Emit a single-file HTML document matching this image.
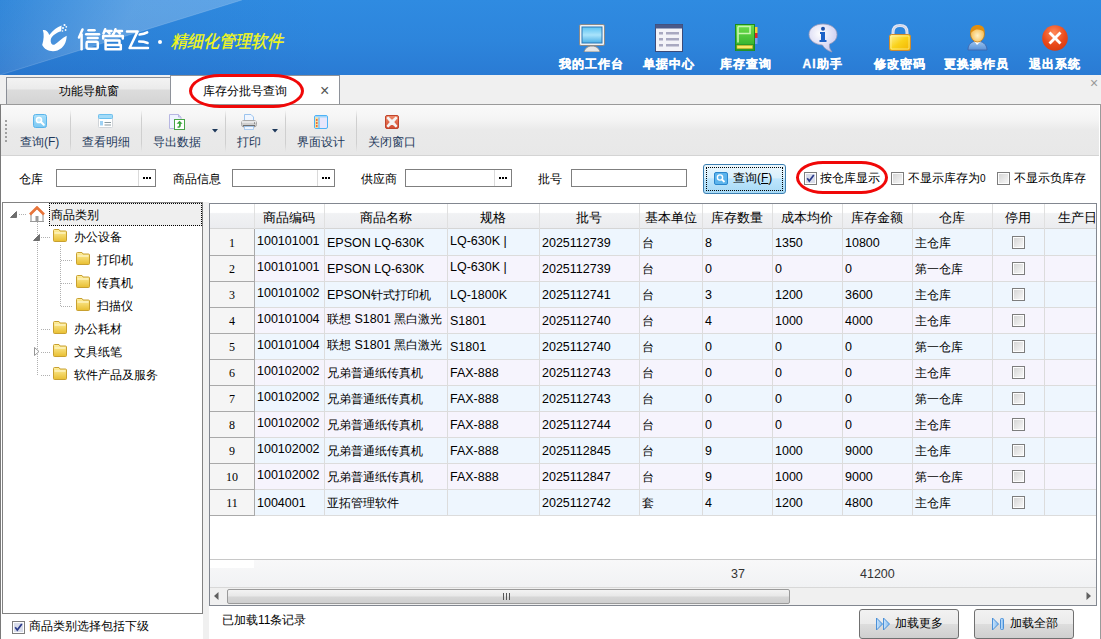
<!DOCTYPE html><html><head><meta charset="utf-8"><style>
*{box-sizing:border-box;margin:0;padding:0}
html,body{width:1101px;height:639px;overflow:hidden;background:#fff;font-family:"Liberation Sans",sans-serif;font-size:12px;color:#000}
div,svg{position:absolute}
.t{white-space:nowrap;line-height:1}
</style></head><body><div style="left:0px;top:0px;width:1101px;height:75px;background:linear-gradient(180deg,#2f8be1 0%,#2d85dc 55%,#2a7bd4 100%);overflow:hidden"><div style="left:0;top:0;width:1101px;height:75px;background:linear-gradient(90deg,rgba(0,30,90,.06),rgba(0,0,0,0) 30%)"></div><svg style="left:0;top:0" width="400" height="75"><defs><linearGradient id="sh" gradientUnits="userSpaceOnUse" x1="0" y1="0" x2="110" y2="55"><stop offset="0" stop-color="#fff" stop-opacity=".03"/><stop offset="1" stop-color="#fff" stop-opacity=".23"/></linearGradient></defs><polygon points="0,0 242,0 0,75" fill="url(#sh)"/><line x1="242" y1="0" x2="0" y2="75" stroke="#fff" stroke-opacity=".15" stroke-width="1"/></svg></div>
<svg style="left:38px;top:20px;" width="34" height="36" viewBox="0 0 34 36"><path d="M4.8 10.1 C7.5 9.6 9.8 10.8 11.3 15 C15 10.5 19 7.2 23.6 5.6 L23.2 11.2 C18.5 12.5 13.8 15.5 12.8 19.5 C12.3 23 14 25.2 16.3 24.8 C20 22.5 24 18 28.7 15.8 C28.6 22 26 28 19.5 30.5 C13 32.5 6.5 30 4.2 25 C5.8 20 6.3 14 4.8 10.1 Z" fill="#fff"/>
<circle cx="26.5" cy="5" r="1.1" fill="#fff"/><circle cx="28.3" cy="6.8" r=".9" fill="#fff"/><circle cx="25" cy="8" r="1" fill="#fff"/><circle cx="27.6" cy="10" r=".9" fill="#fff"/><circle cx="24.5" cy="11" r=".8" fill="#fff"/></svg>
<svg style="left:74px;top:24px;" width="80" height="30" viewBox="0 0 80 30"><g fill="none" stroke="#fff" stroke-width="2.5" stroke-linecap="round" stroke-linejoin="round">
<path d="M8.5 5.5 L5 13.5"/><path d="M7.6 10.5 L7.6 25.2"/>
<path d="M14.5 6.2 L20.5 6.2"/><path d="M12.2 10.2 L25 10.2"/><path d="M13.8 14 L23.6 14"/>
<rect x="12.6" y="17.8" width="11.2" height="7" rx="1.2"/>
<path d="M31.2 5.2 L29.5 9.5"/><path d="M31 7 L37.5 7"/><path d="M34 7.5 L35.5 9.5"/>
<path d="M41.5 5.2 L39.8 9.5"/><path d="M41.3 7 L48 7"/><path d="M44.3 7.5 L45.8 9.5"/>
<path d="M29.2 14.5 L29.2 12 L48.8 12 L48.8 14.5"/><path d="M39 10.2 L39 11.5"/>
<path d="M31.6 16 L31.6 25.2 L46.8 25.2 L46.8 21 L31.6 21"/><path d="M31.6 16.5 L45.5 16.5 L45.5 19.5"/>
<path d="M53 7.4 L63.6 7.4 L55.6 24 L74 24"/>
<path d="M65.6 10.6 C68.5 10.4 71 9.8 73.2 8.4"/><path d="M65.2 17.6 C68.5 17.6 71 18 73.6 19"/>
</g></svg>
<div style="left:158px;top:40px;width:4px;height:4px;background:#fff;border-radius:2px"></div>
<div class="t" style="left:171px;top:33px;font-size:16px;color:#f8fa10;font-style:italic;-webkit-text-stroke:.3px #f8fa10;transform:scaleY(1.07);transform-origin:0 0">精细化管理软件</div>
<svg style="left:579px;top:24px;" width="26" height="28" viewBox="0 0 26 28"><defs><linearGradient id="scr" x1="0" y1="0" x2="0" y2="1"><stop offset="0" stop-color="#5cc2f2"/><stop offset=".5" stop-color="#a9e3fb"/><stop offset="1" stop-color="#4aaee6"/></linearGradient></defs>
<rect x="0.5" y="0.5" width="25" height="21" rx="1.5" fill="#f2f2f2" stroke="#8a8a8a"/>
<rect x="3" y="3" width="20" height="16" fill="url(#scr)" stroke="#2a78b8" stroke-width="1"/>
<path d="M5 28 C6 24 9 22 13 22 C17 22 20 24 21 28 Z" fill="#e6e6e6" stroke="#8a8a8a"/></svg>
<div class="t" style="left:551.5px;top:58px;width:80px;text-align:center;font-size:12px;font-weight:bold;color:#fff;letter-spacing:1px;-webkit-text-stroke:.3px #fff">我的工作台</div>
<svg style="left:655px;top:24px;" width="28" height="28" viewBox="0 0 28 28"><rect x="0.5" y="0.5" width="27" height="27" fill="#f3f3f8" stroke="#3b4a78"/>
<rect x="0.5" y="0.5" width="27" height="4" fill="#4a5a8a"/>
<rect x="4" y="8" width="4" height="2.5" fill="#a8a8c0"/><rect x="11" y="8" width="13" height="2.5" fill="#a8a8c0"/>
<rect x="4" y="14" width="4" height="2.5" fill="#a8a8c0"/><rect x="11" y="14" width="13" height="2.5" fill="#a8a8c0"/>
<rect x="4" y="20" width="4" height="2.5" fill="#a8a8c0"/><rect x="11" y="20" width="13" height="2.5" fill="#a8a8c0"/></svg>
<div class="t" style="left:629px;top:58px;width:80px;text-align:center;font-size:12px;font-weight:bold;color:#fff;letter-spacing:1px;-webkit-text-stroke:.3px #fff">单据中心</div>
<svg style="left:735px;top:24px;" width="23" height="27" viewBox="0 0 23 27"><defs><linearGradient id="bk" x1="0" y1="0" x2="0" y2="1"><stop offset="0" stop-color="#6ee04a"/><stop offset="1" stop-color="#2aa82a"/></linearGradient></defs>
<rect x="19" y="3" width="3.5" height="6" fill="#f8d030"/><rect x="19" y="9" width="3.5" height="5" fill="#e02828"/><rect x="19" y="14" width="3.5" height="6" fill="#7a9ef0"/>
<rect x="0.5" y="0.5" width="19" height="26" fill="url(#bk)" stroke="#1f8a1f"/>
<path d="M3 2.5 L3 18.5 M3 2.5 L15 2.5 L15 9.5 L3 9.5" fill="none" stroke="#c8f5b0" stroke-width="1.6"/>
<rect x="1" y="20" width="18" height="6.5" fill="#2a9a2a"/>
<rect x="2" y="21.5" width="15.5" height="3" fill="#f8e868" stroke="#d8b820" stroke-width=".6"/></svg>
<div class="t" style="left:706px;top:58px;width:80px;text-align:center;font-size:12px;font-weight:bold;color:#fff;letter-spacing:1px;-webkit-text-stroke:.3px #fff">库存查询</div>
<svg style="left:808px;top:23px;" width="30" height="30" viewBox="0 0 30 30"><defs><radialGradient id="bub" cx=".4" cy=".35" r=".7"><stop offset="0" stop-color="#fff"/><stop offset="1" stop-color="#c9c9ef"/></radialGradient></defs>
<path d="M15 1 C23 1 29 5.5 29 11.5 C29 16 26 19.5 21.5 21 C21 24 22 26.5 24 29 C19 27.5 16 25 14.5 22 C6.5 21.5 1 17 1 11.5 C1 5.5 7 1 15 1 Z" fill="url(#bub)" stroke="#9a9ab8" stroke-width=".8"/>
<circle cx="15" cy="5.8" r="2" fill="#1c4fa8"/><path d="M12 9 L17 9 L17 17 L18.5 17 L18.5 19 L11.5 19 L11.5 17 L13 17 L13 11 L12 11 Z" fill="#1e62c8"/></svg>
<div class="t" style="left:782.5px;top:58px;width:80px;text-align:center;font-size:12px;font-weight:bold;color:#fff;letter-spacing:1px;-webkit-text-stroke:.3px #fff">AI助手</div>
<svg style="left:889px;top:24px;" width="22" height="27" viewBox="0 0 22 27"><defs><linearGradient id="lk" x1="0" y1="0" x2="1" y2="1"><stop offset="0" stop-color="#fff39a"/><stop offset=".5" stop-color="#f9d21a"/><stop offset="1" stop-color="#f2b300"/></linearGradient></defs>
<path d="M4 11 L4 8.5 C4 3.5 7 1.6 11 1.6 C15 1.6 18 3.5 18 8.5 L18 11" fill="none" stroke="#e2e6f4" stroke-width="3"/><path d="M4 11 L4 8.5 C4 3.5 7 1.6 11 1.6 C15 1.6 18 3.5 18 8.5 L18 11" fill="none" stroke="#b8bcd0" stroke-width=".5"/>
<rect x="0.5" y="10.5" width="21" height="16" rx="2" fill="url(#lk)" stroke="#d08a2a"/><rect x="2" y="12" width="18" height="13" rx="1" fill="none" stroke="#fff6b0" stroke-opacity=".6"/></svg>
<div class="t" style="left:859.5px;top:58px;width:80px;text-align:center;font-size:12px;font-weight:bold;color:#fff;letter-spacing:1px;-webkit-text-stroke:.3px #fff">修改密码</div>
<svg style="left:967px;top:24px;" width="21" height="27" viewBox="0 0 21 27"><defs><radialGradient id="fc" cx=".5" cy=".6" r=".6"><stop offset="0" stop-color="#fff2c8"/><stop offset="1" stop-color="#f5b23c"/></radialGradient><linearGradient id="bd" x1="0" y1="0" x2="0" y2="1"><stop offset="0" stop-color="#9ec6f0"/><stop offset="1" stop-color="#5a92d8"/></linearGradient></defs>
<path d="M1 26 C1 20 5 17 10 17 C15 17 20 20 20 26 Z" fill="url(#bd)" stroke="#3c62a8" stroke-width=".8"/>
<path d="M7 17 L10 21 L14 17 Z" fill="#fff"/>
<ellipse cx="10.5" cy="10" rx="7" ry="8" fill="url(#fc)" stroke="#c07a10" stroke-width=".8"/>
<path d="M3.5 9 C3 3 7 1 10.5 1 C15 1 18 3.5 17.5 8 C15 6 11 5 8 6 C6 7 5 8 3.5 9 Z" fill="#e08e10"/></svg>
<div class="t" style="left:936.5px;top:58px;width:80px;text-align:center;font-size:12px;font-weight:bold;color:#fff;letter-spacing:1px;-webkit-text-stroke:.3px #fff">更换操作员</div>
<svg style="left:1042px;top:25px;" width="26" height="26" viewBox="0 0 26 26"><defs><radialGradient id="ex" cx=".45" cy=".3" r=".75"><stop offset="0" stop-color="#ff8a5a"/><stop offset=".6" stop-color="#ea4a1a"/><stop offset="1" stop-color="#d63a10"/></radialGradient></defs>
<circle cx="13" cy="13" r="12.8" fill="url(#ex)"/>
<path d="M8.5 6.5 L13 11 L17.5 6.5 L19.5 8.5 L15 13 L19.5 17.5 L17.5 19.5 L13 15 L8.5 19.5 L6.5 17.5 L11 13 L6.5 8.5 Z" fill="#fff"/></svg>
<div class="t" style="left:1014.5px;top:58px;width:80px;text-align:center;font-size:12px;font-weight:bold;color:#fff;letter-spacing:1px;-webkit-text-stroke:.3px #fff">退出系统</div>
<div style="left:0px;top:75px;width:1101px;height:30px;background:#f0f0f0"></div>
<div style="left:6px;top:77px;width:165px;height:28px;border:1px solid #8a8e96;border-bottom:none;background:linear-gradient(#f3f3f3 0%,#ebebeb 40%,#dcdcdc 45%,#d3d3d3 100%)"></div>
<div class="t" style="left:6px;top:85px;width:165px;text-align:center">功能导航窗</div>
<div style="left:170px;top:75px;width:170px;height:31px;border:1px solid #8e929a;border-bottom:none;background:#fff"></div>
<div class="t" style="left:203px;top:85px;">库存分批号查询</div>
<div class="t" style="left:320px;top:83px;font-size:16px;color:#555">×</div>
<div class="t" style="left:1090px;top:76px;font-size:14px;color:#999">×</div>
<div style="left:0px;top:104px;width:1101px;height:535px;border-left:1px solid #7a7a7a;border-top:1px solid #9a9a9a;border-right:1px solid #9a9a9a;background:#fff"></div>
<div style="left:1px;top:105px;width:1098px;height:51px;background:linear-gradient(#fafafa 0%,#f4f4f4 30%,#eaeaea 50%,#e8e8e8 100%);border-bottom:1px solid #d4d4d4"></div>
<div style="left:5px;top:120px;width:2px;height:2px;background:#a0a0a0"></div>
<div style="left:5px;top:124px;width:2px;height:2px;background:#a0a0a0"></div>
<div style="left:5px;top:128px;width:2px;height:2px;background:#a0a0a0"></div>
<div style="left:5px;top:132px;width:2px;height:2px;background:#a0a0a0"></div>
<div style="left:5px;top:136px;width:2px;height:2px;background:#a0a0a0"></div>
<div style="left:5px;top:140px;width:2px;height:2px;background:#a0a0a0"></div>
<div style="left:70px;top:110px;width:1px;height:42px;background:linear-gradient(rgba(200,200,200,0),#cfcfcf 20%,#cfcfcf 80%,rgba(200,200,200,0))"></div>
<div style="left:141px;top:110px;width:1px;height:42px;background:linear-gradient(rgba(200,200,200,0),#cfcfcf 20%,#cfcfcf 80%,rgba(200,200,200,0))"></div>
<div style="left:225px;top:110px;width:1px;height:42px;background:linear-gradient(rgba(200,200,200,0),#cfcfcf 20%,#cfcfcf 80%,rgba(200,200,200,0))"></div>
<div style="left:285px;top:110px;width:1px;height:42px;background:linear-gradient(rgba(200,200,200,0),#cfcfcf 20%,#cfcfcf 80%,rgba(200,200,200,0))"></div>
<div style="left:356px;top:110px;width:1px;height:42px;background:linear-gradient(rgba(200,200,200,0),#cfcfcf 20%,#cfcfcf 80%,rgba(200,200,200,0))"></div>
<div class="t" style="left:20px;top:136px;width:38px;text-align:center;color:#1e395b;font-size:12px">查询(F)</div>
<svg style="left:33px;top:114px;" width="14" height="14" viewBox="0 0 14 14"><defs><linearGradient id="qg" x1="0" y1="0" x2="0" y2="1"><stop offset="0" stop-color="#a9e0fb"/><stop offset="1" stop-color="#7cc8f2"/></linearGradient></defs><rect x=".5" y=".5" width="13" height="13" rx="2" fill="url(#qg)" stroke="#5ab4ea"/><circle cx="6" cy="6" r="2.6" fill="#c8ecfc" stroke="#fff" stroke-width="1.5"/><path d="M7.8 7.8 L10.8 10.8" stroke="#fff" stroke-width="2" stroke-linecap="round"/></svg>
<div class="t" style="left:80px;top:136px;width:51px;text-align:center;color:#1e395b;font-size:12px">查看明细</div>
<svg style="left:98px;top:114px;" width="15" height="14" viewBox="0 0 15 14"><rect x=".5" y=".5" width="14" height="13" rx="1" fill="#fff" stroke="#d0d4d8"/><rect x=".5" y=".5" width="14" height="4" rx="1" fill="#a3dbf8" stroke="#6cc0ee"/><rect x="2" y="7" width="3" height="4.5" fill="#9fd2f4"/><rect x="6.5" y="8" width="6.5" height="1" fill="#8a9aa0"/><rect x="6.5" y="10.5" width="6.5" height="1" fill="#8a9aa0"/></svg>
<div class="t" style="left:151px;top:136px;width:52px;text-align:center;color:#1e395b;font-size:12px">导出数据</div>
<svg style="left:169px;top:114px;" width="16" height="16" viewBox="0 0 16 16"><path d="M.5 .5 L9.5 .5 L12 3 L12 14.5 L.5 14.5 Z" fill="#eef3ff" stroke="#b7b6e2"/><path d="M9.5 .5 L9.5 3 L12 3" fill="#d9d8f4" stroke="#b7b6e2"/><rect x="5.5" y="5.5" width="10" height="10" fill="#fff" stroke="#48a448"/><path d="M10.5 6.8 L13.6 9.8 L11.8 9.8 L11.8 11.5 C11.8 13 10.5 14 8.5 13.8 L8.5 12.6 C9.5 12.6 10 12 10 11.3 L10 9.8 L7.6 9.8 Z" fill="#3aa83a"/></svg>
<svg style="left:212px;top:129px;" width="6" height="4" viewBox="0 0 6 4"><path d="M0 0 L6 0 L3 3.5 Z" fill="#1e395b"/></svg>
<div class="t" style="left:236px;top:136px;width:26px;text-align:center;color:#1e395b;font-size:12px">打印</div>
<svg style="left:241px;top:114px;" width="16" height="16" viewBox="0 0 16 16"><path d="M3.5 .5 L10 .5 L12.5 3 L12.5 7 L3.5 7 Z" fill="#f0f6ff" stroke="#9cc4ee"/><rect x=".5" y="6.5" width="15" height="6.5" rx="2.5" fill="#cfcfcf" stroke="#a8a8a8"/><rect x="1" y="7" width="14" height="2" fill="#e6e6e6"/><rect x="2" y="11" width="12" height="1.5" fill="#6e6e6e"/><rect x="3.5" y="12.5" width="9" height="3" fill="#eef5ff" stroke="#9cc4ee" stroke-width=".8"/><rect x="13" y="8.5" width="1" height="1" fill="#555"/></svg>
<svg style="left:272px;top:129px;" width="6" height="4" viewBox="0 0 6 4"><path d="M0 0 L6 0 L3 3.5 Z" fill="#1e395b"/></svg>
<div class="t" style="left:295px;top:136px;width:52px;text-align:center;color:#1e395b;font-size:12px">界面设计</div>
<svg style="left:314px;top:115px;" width="14" height="14" viewBox="0 0 14 14"><rect x=".5" y=".5" width="13" height="13" rx="1.5" fill="#e8e6fb" stroke="#4fb2f6"/><rect x="1" y="1" width="12" height="1.5" fill="#9fd6fa"/><rect x="1" y="2.5" width="3.5" height="10.5" fill="#f7e39a"/><rect x="4.5" y="2.5" width="1" height="10.5" fill="#4fb2f6"/><circle cx="2.8" cy="5" r=".9" fill="#e8553a"/><circle cx="2.8" cy="8" r=".9" fill="#e8553a"/><circle cx="2.8" cy="11" r=".9" fill="#e8553a"/></svg>
<div class="t" style="left:366px;top:136px;width:51px;text-align:center;color:#1e395b;font-size:12px">关闭窗口</div>
<svg style="left:385px;top:115px;" width="14" height="14" viewBox="0 0 14 14"><defs><linearGradient id="cg" x1="0" y1="0" x2="0" y2="1"><stop offset="0" stop-color="#f08a6a"/><stop offset="1" stop-color="#d04a30"/></linearGradient></defs><rect x=".5" y=".5" width="13" height="13" rx="1.5" fill="url(#cg)" stroke="#c0442c"/><path d="M3.2 2.2 L7 5.6 L10.8 2.2 L11.8 3.2 L8.4 7 L11.8 10.8 L10.8 11.8 L7 8.4 L3.2 11.8 L2.2 10.8 L5.6 7 L2.2 3.2 Z" fill="#f4f4f4" stroke="#f4f4f4" stroke-width="1.2" stroke-linejoin="round"/></svg>
<div class="t" style="left:19px;top:173px;">仓库</div>
<div style="left:56px;top:169px;width:100px;height:18px;border:1px solid #7f7f7f;background:#fff"></div>
<div style="left:138px;top:170px;width:1px;height:16px;background:#dadada"></div>
<div style="left:143px;top:177px;width:2px;height:2px;background:#000"></div>
<div style="left:146px;top:177px;width:2px;height:2px;background:#000"></div>
<div style="left:149px;top:177px;width:2px;height:2px;background:#000"></div>
<div class="t" style="left:173px;top:173px;">商品信息</div>
<div style="left:232px;top:169px;width:103px;height:18px;border:1px solid #7f7f7f;background:#fff"></div>
<div style="left:317px;top:170px;width:1px;height:16px;background:#dadada"></div>
<div style="left:322px;top:177px;width:2px;height:2px;background:#000"></div>
<div style="left:325px;top:177px;width:2px;height:2px;background:#000"></div>
<div style="left:328px;top:177px;width:2px;height:2px;background:#000"></div>
<div class="t" style="left:361px;top:173px;">供应商</div>
<div style="left:405px;top:169px;width:107px;height:18px;border:1px solid #7f7f7f;background:#fff"></div>
<div style="left:494px;top:170px;width:1px;height:16px;background:#dadada"></div>
<div style="left:499px;top:177px;width:2px;height:2px;background:#000"></div>
<div style="left:502px;top:177px;width:2px;height:2px;background:#000"></div>
<div style="left:505px;top:177px;width:2px;height:2px;background:#000"></div>
<div class="t" style="left:538px;top:173px;">批号</div>
<div style="left:571px;top:169px;width:116px;height:18px;border:1px solid #7f7f7f;background:#fff"></div>
<div style="left:703px;top:164px;width:83px;height:30px;border:1px solid #3c7fb1;border-radius:3px;background:linear-gradient(#eaf6fd 0%,#d9f0fc 45%,#bee6fd 50%,#a7d9f5 100%)"></div>
<div style="left:706px;top:167px;width:77px;height:24px;border:1px dotted #000"></div>
<svg style="left:714px;top:172px;" width="14" height="13" viewBox="0 0 14 13"><rect x=".5" y=".5" width="13" height="12" rx="1.5" fill="#5cb4ec" stroke="#2a86cc"/><circle cx="6" cy="5.5" r="2.6" fill="none" stroke="#fff" stroke-width="1.4"/><path d="M8 7.5 L10.5 10" stroke="#fff" stroke-width="1.8"/></svg>
<div class="t" style="left:733px;top:172px;">查询(<u>F</u>)</div>
<svg style="left:804px;top:172px;" width="13" height="13" viewBox="0 0 13 13"><rect x=".5" y=".5" width="12" height="12" fill="#fdfdfd" stroke="#7d7d7d"/><rect x="2" y="2" width="9" height="9" fill="#d8dcea"/><path d="M3.2 6.3 L5.3 9 L9.8 3" fill="none" stroke="#2a3a8a" stroke-width="1.7"/></svg>
<div class="t" style="left:820px;top:172px;">按仓库显示</div>
<svg style="left:891px;top:172px;" width="13" height="13" viewBox="0 0 13 13"><defs><linearGradient id="cbg" x1="0" y1="0" x2="1" y2="1"><stop offset="0" stop-color="#d6d6d6"/><stop offset="1" stop-color="#f6f6f6"/></linearGradient></defs><rect x=".5" y=".5" width="12" height="12" fill="#fdfdfd" stroke="#7d7d7d"/><rect x="2" y="2" width="9" height="9" fill="url(#cbg)"/></svg>
<div class="t" style="left:908px;top:172px;">不显示库存为<span style="font-size:10px">0</span></div>
<svg style="left:997px;top:172px;" width="13" height="13" viewBox="0 0 13 13"><defs><linearGradient id="cbg" x1="0" y1="0" x2="1" y2="1"><stop offset="0" stop-color="#d6d6d6"/><stop offset="1" stop-color="#f6f6f6"/></linearGradient></defs><rect x=".5" y=".5" width="12" height="12" fill="#fdfdfd" stroke="#7d7d7d"/><rect x="2" y="2" width="9" height="9" fill="url(#cbg)"/></svg>
<div class="t" style="left:1014px;top:172px;">不显示负库存</div>
<div style="left:203px;top:202px;width:6px;height:437px;background:#f0f0f0"></div>
<div style="left:2px;top:202px;width:201px;height:412px;border:1px solid #828282;background:#fff"></div>
<div style="left:37px;top:222px;width:1px;height:154px;background:repeating-linear-gradient(180deg,#b0b0b0 0 1px,transparent 1px 2px)"></div>
<div style="left:60px;top:245px;width:1px;height:62px;background:repeating-linear-gradient(180deg,#b0b0b0 0 1px,transparent 1px 2px)"></div>
<div style="left:19px;top:214px;width:8px;height:1px;background:repeating-linear-gradient(90deg,#b0b0b0 0 1px,transparent 1px 2px)"></div>
<div style="left:41px;top:237px;width:9px;height:1px;background:repeating-linear-gradient(90deg,#b0b0b0 0 1px,transparent 1px 2px)"></div>
<div style="left:41px;top:329px;width:9px;height:1px;background:repeating-linear-gradient(90deg,#b0b0b0 0 1px,transparent 1px 2px)"></div>
<div style="left:41px;top:352px;width:9px;height:1px;background:repeating-linear-gradient(90deg,#b0b0b0 0 1px,transparent 1px 2px)"></div>
<div style="left:41px;top:375px;width:9px;height:1px;background:repeating-linear-gradient(90deg,#b0b0b0 0 1px,transparent 1px 2px)"></div>
<div style="left:61px;top:260px;width:12px;height:1px;background:repeating-linear-gradient(90deg,#b0b0b0 0 1px,transparent 1px 2px)"></div>
<div style="left:61px;top:283px;width:12px;height:1px;background:repeating-linear-gradient(90deg,#b0b0b0 0 1px,transparent 1px 2px)"></div>
<div style="left:61px;top:306px;width:12px;height:1px;background:repeating-linear-gradient(90deg,#b0b0b0 0 1px,transparent 1px 2px)"></div>
<svg style="left:10px;top:211px;" width="7" height="7" viewBox="0 0 7 7"><path d="M6.5 .5 L6.5 6.5 L.5 6.5 Z" fill="#6e6e6e" stroke="#505050" stroke-width=".7"/></svg>
<svg style="left:29px;top:206px;" width="16" height="16" viewBox="0 0 16 16"><path d="M2 15.5 L2 8 L8 2.5 L14 8 L14 15.5 Z" fill="#fff" stroke="#8a8a8a"/><rect x="6.5" y="10" width="3" height="5.5" fill="#9a9a9a"/><path d="M1 8.5 L8 1.5 L15 8.5" fill="none" stroke="#e8743a" stroke-width="2.6"/><path d="M1 15.5 L15 15.5" stroke="#999"/></svg>
<div style="left:49px;top:203px;width:153px;height:23px;border:1px dotted #000;background:#efefef"></div>
<div class="t" style="left:51px;top:209px;">商品类别</div>
<svg style="left:33px;top:234px;" width="7" height="7" viewBox="0 0 7 7"><path d="M6.5 .5 L6.5 6.5 L.5 6.5 Z" fill="#6e6e6e" stroke="#505050" stroke-width=".7"/></svg>
<svg style="left:53px;top:229px;" width="14" height="13" viewBox="0 0 14 13"><defs><linearGradient id="fd" x1="0" y1="0" x2="0" y2="1"><stop offset="0" stop-color="#fff0a0"/><stop offset="1" stop-color="#e8be30"/></linearGradient></defs><path d="M1.5 .5 L6 .5 L7 2 L12.5 2 Q13.5 2 13.5 3 L13.5 11.5 Q13.5 12.5 12.5 12.5 L1.5 12.5 Q.5 12.5 .5 11.5 L.5 1.5 Q.5 .5 1.5 .5 Z" fill="url(#fd)" stroke="#c8a030"/><path d="M1.5 4 L12.5 4" stroke="#fffbe0" stroke-width="1"/></svg>
<div class="t" style="left:74px;top:231px;">办公设备</div>
<svg style="left:76px;top:252px;" width="14" height="13" viewBox="0 0 14 13"><defs><linearGradient id="fd" x1="0" y1="0" x2="0" y2="1"><stop offset="0" stop-color="#fff0a0"/><stop offset="1" stop-color="#e8be30"/></linearGradient></defs><path d="M1.5 .5 L6 .5 L7 2 L12.5 2 Q13.5 2 13.5 3 L13.5 11.5 Q13.5 12.5 12.5 12.5 L1.5 12.5 Q.5 12.5 .5 11.5 L.5 1.5 Q.5 .5 1.5 .5 Z" fill="url(#fd)" stroke="#c8a030"/><path d="M1.5 4 L12.5 4" stroke="#fffbe0" stroke-width="1"/></svg>
<div class="t" style="left:97px;top:254px;">打印机</div>
<svg style="left:76px;top:275px;" width="14" height="13" viewBox="0 0 14 13"><defs><linearGradient id="fd" x1="0" y1="0" x2="0" y2="1"><stop offset="0" stop-color="#fff0a0"/><stop offset="1" stop-color="#e8be30"/></linearGradient></defs><path d="M1.5 .5 L6 .5 L7 2 L12.5 2 Q13.5 2 13.5 3 L13.5 11.5 Q13.5 12.5 12.5 12.5 L1.5 12.5 Q.5 12.5 .5 11.5 L.5 1.5 Q.5 .5 1.5 .5 Z" fill="url(#fd)" stroke="#c8a030"/><path d="M1.5 4 L12.5 4" stroke="#fffbe0" stroke-width="1"/></svg>
<div class="t" style="left:97px;top:277px;">传真机</div>
<svg style="left:76px;top:298px;" width="14" height="13" viewBox="0 0 14 13"><defs><linearGradient id="fd" x1="0" y1="0" x2="0" y2="1"><stop offset="0" stop-color="#fff0a0"/><stop offset="1" stop-color="#e8be30"/></linearGradient></defs><path d="M1.5 .5 L6 .5 L7 2 L12.5 2 Q13.5 2 13.5 3 L13.5 11.5 Q13.5 12.5 12.5 12.5 L1.5 12.5 Q.5 12.5 .5 11.5 L.5 1.5 Q.5 .5 1.5 .5 Z" fill="url(#fd)" stroke="#c8a030"/><path d="M1.5 4 L12.5 4" stroke="#fffbe0" stroke-width="1"/></svg>
<div class="t" style="left:97px;top:300px;">扫描仪</div>
<svg style="left:53px;top:321px;" width="14" height="13" viewBox="0 0 14 13"><defs><linearGradient id="fd" x1="0" y1="0" x2="0" y2="1"><stop offset="0" stop-color="#fff0a0"/><stop offset="1" stop-color="#e8be30"/></linearGradient></defs><path d="M1.5 .5 L6 .5 L7 2 L12.5 2 Q13.5 2 13.5 3 L13.5 11.5 Q13.5 12.5 12.5 12.5 L1.5 12.5 Q.5 12.5 .5 11.5 L.5 1.5 Q.5 .5 1.5 .5 Z" fill="url(#fd)" stroke="#c8a030"/><path d="M1.5 4 L12.5 4" stroke="#fffbe0" stroke-width="1"/></svg>
<div class="t" style="left:74px;top:323px;">办公耗材</div>
<svg style="left:34px;top:347px;" width="6" height="9" viewBox="0 0 6 9"><path d="M.5 .5 L5 4.5 L.5 8.5 Z" fill="#fff" stroke="#8a8a8a" stroke-width=".9"/></svg>
<svg style="left:53px;top:344px;" width="14" height="13" viewBox="0 0 14 13"><defs><linearGradient id="fd" x1="0" y1="0" x2="0" y2="1"><stop offset="0" stop-color="#fff0a0"/><stop offset="1" stop-color="#e8be30"/></linearGradient></defs><path d="M1.5 .5 L6 .5 L7 2 L12.5 2 Q13.5 2 13.5 3 L13.5 11.5 Q13.5 12.5 12.5 12.5 L1.5 12.5 Q.5 12.5 .5 11.5 L.5 1.5 Q.5 .5 1.5 .5 Z" fill="url(#fd)" stroke="#c8a030"/><path d="M1.5 4 L12.5 4" stroke="#fffbe0" stroke-width="1"/></svg>
<div class="t" style="left:74px;top:346px;">文具纸笔</div>
<svg style="left:53px;top:367px;" width="14" height="13" viewBox="0 0 14 13"><defs><linearGradient id="fd" x1="0" y1="0" x2="0" y2="1"><stop offset="0" stop-color="#fff0a0"/><stop offset="1" stop-color="#e8be30"/></linearGradient></defs><path d="M1.5 .5 L6 .5 L7 2 L12.5 2 Q13.5 2 13.5 3 L13.5 11.5 Q13.5 12.5 12.5 12.5 L1.5 12.5 Q.5 12.5 .5 11.5 L.5 1.5 Q.5 .5 1.5 .5 Z" fill="url(#fd)" stroke="#c8a030"/><path d="M1.5 4 L12.5 4" stroke="#fffbe0" stroke-width="1"/></svg>
<div class="t" style="left:74px;top:369px;">软件产品及服务</div>
<svg style="left:12px;top:621px;" width="13" height="13" viewBox="0 0 13 13"><rect x=".5" y=".5" width="12" height="12" fill="#fdfdfd" stroke="#7d7d7d"/><rect x="2" y="2" width="9" height="9" fill="#d8dcea"/><path d="M3.2 6.3 L5.3 9 L9.8 3" fill="none" stroke="#2a3a8a" stroke-width="1.7"/></svg>
<div class="t" style="left:29px;top:620px;">商品类别选择包括下级</div>
<div style="left:209px;top:203px;width:888px;height:403px;border:1px solid #828790;background:#fff"></div>
<div style="left:210px;top:204px;width:886px;height:25px;background:linear-gradient(#ffffff 0%,#ffffff 35%,#f1f2f4 40%,#ebecef 100%);border-bottom:1px solid #d5d5d5"></div>
<div style="left:254px;top:204px;width:1px;height:25px;background:#e0e0e0"></div>
<div style="left:324px;top:204px;width:1px;height:25px;background:#e0e0e0"></div>
<div style="left:447px;top:204px;width:1px;height:25px;background:#e0e0e0"></div>
<div style="left:539px;top:204px;width:1px;height:25px;background:#e0e0e0"></div>
<div style="left:639px;top:204px;width:1px;height:25px;background:#e0e0e0"></div>
<div style="left:702px;top:204px;width:1px;height:25px;background:#e0e0e0"></div>
<div style="left:772px;top:204px;width:1px;height:25px;background:#e0e0e0"></div>
<div style="left:842px;top:204px;width:1px;height:25px;background:#e0e0e0"></div>
<div style="left:912px;top:204px;width:1px;height:25px;background:#e0e0e0"></div>
<div style="left:992px;top:204px;width:1px;height:25px;background:#e0e0e0"></div>
<div style="left:1044px;top:204px;width:1px;height:25px;background:#e0e0e0"></div>
<div class="t" style="left:254px;top:211px;width:70px;text-align:center;font-size:13px">商品编码</div>
<div class="t" style="left:324px;top:211px;width:123px;text-align:center;font-size:13px">商品名称</div>
<div class="t" style="left:447px;top:211px;width:92px;text-align:center;font-size:13px">规格</div>
<div class="t" style="left:539px;top:211px;width:100px;text-align:center;font-size:13px">批号</div>
<div class="t" style="left:639px;top:211px;width:63px;text-align:center;font-size:13px">基本单位</div>
<div class="t" style="left:702px;top:211px;width:70px;text-align:center;font-size:13px">库存数量</div>
<div class="t" style="left:772px;top:211px;width:70px;text-align:center;font-size:13px">成本均价</div>
<div class="t" style="left:842px;top:211px;width:70px;text-align:center;font-size:13px">库存金额</div>
<div class="t" style="left:912px;top:211px;width:80px;text-align:center;font-size:13px">仓库</div>
<div class="t" style="left:992px;top:211px;width:52px;text-align:center;font-size:13px">停用</div>
<div style="left:1044px;top:204px;width:51px;height:25px;overflow:hidden"><div class="t" style="left:14px;top:7px;font-size:13px">生产日期</div></div>
<div style="left:255px;top:229px;width:841px;height:26px;background:#eef6fe"></div>
<div style="left:210px;top:229px;width:44px;height:26px;background:#f5f5f5"></div>
<div class="t" style="left:210px;top:237px;width:44px;text-align:center;font-family:'Liberation Serif',serif;font-size:12px">1</div>
<div class="t" style="left:257px;top:235px;"><span style="font-size:12.5px">100101001</span></div>
<div class="t" style="left:327px;top:237px;"><span style="font-size:12.5px">EPSON LQ-630K</span></div>
<div class="t" style="left:450px;top:235px;"><span style="font-size:12.5px">LQ-630K |</span></div>
<div class="t" style="left:542px;top:237px;"><span style="font-size:12.5px">2025112739</span></div>
<div class="t" style="left:642px;top:237px;">台</div>
<div class="t" style="left:705px;top:237px;"><span style="font-size:12.5px">8</span></div>
<div class="t" style="left:775px;top:237px;"><span style="font-size:12.5px">1350</span></div>
<div class="t" style="left:845px;top:237px;"><span style="font-size:12.5px">10800</span></div>
<div class="t" style="left:915px;top:237px;">主仓库</div>
<svg style="left:1012px;top:236px;" width="13" height="13" viewBox="0 0 13 13"><defs><linearGradient id="cbg" x1="0" y1="0" x2="1" y2="1"><stop offset="0" stop-color="#d6d6d6"/><stop offset="1" stop-color="#f6f6f6"/></linearGradient></defs><rect x=".5" y=".5" width="12" height="12" fill="#fdfdfd" stroke="#7d7d7d"/><rect x="2" y="2" width="9" height="9" fill="url(#cbg)"/></svg>
<div style="left:255px;top:255px;width:841px;height:26px;background:#f6f4fd"></div>
<div style="left:210px;top:255px;width:44px;height:26px;background:#f5f5f5"></div>
<div class="t" style="left:210px;top:263px;width:44px;text-align:center;font-family:'Liberation Serif',serif;font-size:12px">2</div>
<div class="t" style="left:257px;top:261px;"><span style="font-size:12.5px">100101001</span></div>
<div class="t" style="left:327px;top:263px;"><span style="font-size:12.5px">EPSON LQ-630K</span></div>
<div class="t" style="left:450px;top:261px;"><span style="font-size:12.5px">LQ-630K |</span></div>
<div class="t" style="left:542px;top:263px;"><span style="font-size:12.5px">2025112739</span></div>
<div class="t" style="left:642px;top:263px;">台</div>
<div class="t" style="left:705px;top:263px;"><span style="font-size:12.5px">0</span></div>
<div class="t" style="left:775px;top:263px;"><span style="font-size:12.5px">0</span></div>
<div class="t" style="left:845px;top:263px;"><span style="font-size:12.5px">0</span></div>
<div class="t" style="left:915px;top:263px;">第一仓库</div>
<svg style="left:1012px;top:262px;" width="13" height="13" viewBox="0 0 13 13"><defs><linearGradient id="cbg" x1="0" y1="0" x2="1" y2="1"><stop offset="0" stop-color="#d6d6d6"/><stop offset="1" stop-color="#f6f6f6"/></linearGradient></defs><rect x=".5" y=".5" width="12" height="12" fill="#fdfdfd" stroke="#7d7d7d"/><rect x="2" y="2" width="9" height="9" fill="url(#cbg)"/></svg>
<div style="left:255px;top:281px;width:841px;height:26px;background:#eef6fe"></div>
<div style="left:210px;top:281px;width:44px;height:26px;background:#f5f5f5"></div>
<div class="t" style="left:210px;top:289px;width:44px;text-align:center;font-family:'Liberation Serif',serif;font-size:12px">3</div>
<div class="t" style="left:257px;top:287px;"><span style="font-size:12.5px">100101002</span></div>
<div class="t" style="left:327px;top:289px;"><span style="font-size:12.5px">EPSON</span>针式打印机</div>
<div class="t" style="left:450px;top:289px;"><span style="font-size:12.5px">LQ-1800K</span></div>
<div class="t" style="left:542px;top:289px;"><span style="font-size:12.5px">2025112741</span></div>
<div class="t" style="left:642px;top:289px;">台</div>
<div class="t" style="left:705px;top:289px;"><span style="font-size:12.5px">3</span></div>
<div class="t" style="left:775px;top:289px;"><span style="font-size:12.5px">1200</span></div>
<div class="t" style="left:845px;top:289px;"><span style="font-size:12.5px">3600</span></div>
<div class="t" style="left:915px;top:289px;">主仓库</div>
<svg style="left:1012px;top:288px;" width="13" height="13" viewBox="0 0 13 13"><defs><linearGradient id="cbg" x1="0" y1="0" x2="1" y2="1"><stop offset="0" stop-color="#d6d6d6"/><stop offset="1" stop-color="#f6f6f6"/></linearGradient></defs><rect x=".5" y=".5" width="12" height="12" fill="#fdfdfd" stroke="#7d7d7d"/><rect x="2" y="2" width="9" height="9" fill="url(#cbg)"/></svg>
<div style="left:255px;top:307px;width:841px;height:26px;background:#f6f4fd"></div>
<div style="left:210px;top:307px;width:44px;height:26px;background:#f5f5f5"></div>
<div class="t" style="left:210px;top:315px;width:44px;text-align:center;font-family:'Liberation Serif',serif;font-size:12px">4</div>
<div class="t" style="left:257px;top:313px;"><span style="font-size:12.5px">100101004</span></div>
<div class="t" style="left:327px;top:313px;">联想<span style="font-size:12.5px"> S1801 </span>黑白激光</div>
<div class="t" style="left:450px;top:315px;"><span style="font-size:12.5px">S1801</span></div>
<div class="t" style="left:542px;top:315px;"><span style="font-size:12.5px">2025112740</span></div>
<div class="t" style="left:642px;top:315px;">台</div>
<div class="t" style="left:705px;top:315px;"><span style="font-size:12.5px">4</span></div>
<div class="t" style="left:775px;top:315px;"><span style="font-size:12.5px">1000</span></div>
<div class="t" style="left:845px;top:315px;"><span style="font-size:12.5px">4000</span></div>
<div class="t" style="left:915px;top:315px;">主仓库</div>
<svg style="left:1012px;top:314px;" width="13" height="13" viewBox="0 0 13 13"><defs><linearGradient id="cbg" x1="0" y1="0" x2="1" y2="1"><stop offset="0" stop-color="#d6d6d6"/><stop offset="1" stop-color="#f6f6f6"/></linearGradient></defs><rect x=".5" y=".5" width="12" height="12" fill="#fdfdfd" stroke="#7d7d7d"/><rect x="2" y="2" width="9" height="9" fill="url(#cbg)"/></svg>
<div style="left:255px;top:333px;width:841px;height:26px;background:#eef6fe"></div>
<div style="left:210px;top:333px;width:44px;height:26px;background:#f5f5f5"></div>
<div class="t" style="left:210px;top:341px;width:44px;text-align:center;font-family:'Liberation Serif',serif;font-size:12px">5</div>
<div class="t" style="left:257px;top:339px;"><span style="font-size:12.5px">100101004</span></div>
<div class="t" style="left:327px;top:339px;">联想<span style="font-size:12.5px"> S1801 </span>黑白激光</div>
<div class="t" style="left:450px;top:341px;"><span style="font-size:12.5px">S1801</span></div>
<div class="t" style="left:542px;top:341px;"><span style="font-size:12.5px">2025112740</span></div>
<div class="t" style="left:642px;top:341px;">台</div>
<div class="t" style="left:705px;top:341px;"><span style="font-size:12.5px">0</span></div>
<div class="t" style="left:775px;top:341px;"><span style="font-size:12.5px">0</span></div>
<div class="t" style="left:845px;top:341px;"><span style="font-size:12.5px">0</span></div>
<div class="t" style="left:915px;top:341px;">第一仓库</div>
<svg style="left:1012px;top:340px;" width="13" height="13" viewBox="0 0 13 13"><defs><linearGradient id="cbg" x1="0" y1="0" x2="1" y2="1"><stop offset="0" stop-color="#d6d6d6"/><stop offset="1" stop-color="#f6f6f6"/></linearGradient></defs><rect x=".5" y=".5" width="12" height="12" fill="#fdfdfd" stroke="#7d7d7d"/><rect x="2" y="2" width="9" height="9" fill="url(#cbg)"/></svg>
<div style="left:255px;top:359px;width:841px;height:26px;background:#f6f4fd"></div>
<div style="left:210px;top:359px;width:44px;height:26px;background:#f5f5f5"></div>
<div class="t" style="left:210px;top:367px;width:44px;text-align:center;font-family:'Liberation Serif',serif;font-size:12px">6</div>
<div class="t" style="left:257px;top:365px;"><span style="font-size:12.5px">100102002</span></div>
<div class="t" style="left:327px;top:367px;">兄弟普通纸传真机</div>
<div class="t" style="left:450px;top:367px;"><span style="font-size:12.5px">FAX-888</span></div>
<div class="t" style="left:542px;top:367px;"><span style="font-size:12.5px">2025112743</span></div>
<div class="t" style="left:642px;top:367px;">台</div>
<div class="t" style="left:705px;top:367px;"><span style="font-size:12.5px">0</span></div>
<div class="t" style="left:775px;top:367px;"><span style="font-size:12.5px">0</span></div>
<div class="t" style="left:845px;top:367px;"><span style="font-size:12.5px">0</span></div>
<div class="t" style="left:915px;top:367px;">主仓库</div>
<svg style="left:1012px;top:366px;" width="13" height="13" viewBox="0 0 13 13"><defs><linearGradient id="cbg" x1="0" y1="0" x2="1" y2="1"><stop offset="0" stop-color="#d6d6d6"/><stop offset="1" stop-color="#f6f6f6"/></linearGradient></defs><rect x=".5" y=".5" width="12" height="12" fill="#fdfdfd" stroke="#7d7d7d"/><rect x="2" y="2" width="9" height="9" fill="url(#cbg)"/></svg>
<div style="left:255px;top:385px;width:841px;height:26px;background:#eef6fe"></div>
<div style="left:210px;top:385px;width:44px;height:26px;background:#f5f5f5"></div>
<div class="t" style="left:210px;top:393px;width:44px;text-align:center;font-family:'Liberation Serif',serif;font-size:12px">7</div>
<div class="t" style="left:257px;top:391px;"><span style="font-size:12.5px">100102002</span></div>
<div class="t" style="left:327px;top:393px;">兄弟普通纸传真机</div>
<div class="t" style="left:450px;top:393px;"><span style="font-size:12.5px">FAX-888</span></div>
<div class="t" style="left:542px;top:393px;"><span style="font-size:12.5px">2025112743</span></div>
<div class="t" style="left:642px;top:393px;">台</div>
<div class="t" style="left:705px;top:393px;"><span style="font-size:12.5px">0</span></div>
<div class="t" style="left:775px;top:393px;"><span style="font-size:12.5px">0</span></div>
<div class="t" style="left:845px;top:393px;"><span style="font-size:12.5px">0</span></div>
<div class="t" style="left:915px;top:393px;">第一仓库</div>
<svg style="left:1012px;top:392px;" width="13" height="13" viewBox="0 0 13 13"><defs><linearGradient id="cbg" x1="0" y1="0" x2="1" y2="1"><stop offset="0" stop-color="#d6d6d6"/><stop offset="1" stop-color="#f6f6f6"/></linearGradient></defs><rect x=".5" y=".5" width="12" height="12" fill="#fdfdfd" stroke="#7d7d7d"/><rect x="2" y="2" width="9" height="9" fill="url(#cbg)"/></svg>
<div style="left:255px;top:411px;width:841px;height:26px;background:#f6f4fd"></div>
<div style="left:210px;top:411px;width:44px;height:26px;background:#f5f5f5"></div>
<div class="t" style="left:210px;top:419px;width:44px;text-align:center;font-family:'Liberation Serif',serif;font-size:12px">8</div>
<div class="t" style="left:257px;top:417px;"><span style="font-size:12.5px">100102002</span></div>
<div class="t" style="left:327px;top:419px;">兄弟普通纸传真机</div>
<div class="t" style="left:450px;top:419px;"><span style="font-size:12.5px">FAX-888</span></div>
<div class="t" style="left:542px;top:419px;"><span style="font-size:12.5px">2025112744</span></div>
<div class="t" style="left:642px;top:419px;">台</div>
<div class="t" style="left:705px;top:419px;"><span style="font-size:12.5px">0</span></div>
<div class="t" style="left:775px;top:419px;"><span style="font-size:12.5px">0</span></div>
<div class="t" style="left:845px;top:419px;"><span style="font-size:12.5px">0</span></div>
<div class="t" style="left:915px;top:419px;">主仓库</div>
<svg style="left:1012px;top:418px;" width="13" height="13" viewBox="0 0 13 13"><defs><linearGradient id="cbg" x1="0" y1="0" x2="1" y2="1"><stop offset="0" stop-color="#d6d6d6"/><stop offset="1" stop-color="#f6f6f6"/></linearGradient></defs><rect x=".5" y=".5" width="12" height="12" fill="#fdfdfd" stroke="#7d7d7d"/><rect x="2" y="2" width="9" height="9" fill="url(#cbg)"/></svg>
<div style="left:255px;top:437px;width:841px;height:26px;background:#eef6fe"></div>
<div style="left:210px;top:437px;width:44px;height:26px;background:#f5f5f5"></div>
<div class="t" style="left:210px;top:445px;width:44px;text-align:center;font-family:'Liberation Serif',serif;font-size:12px">9</div>
<div class="t" style="left:257px;top:443px;"><span style="font-size:12.5px">100102002</span></div>
<div class="t" style="left:327px;top:445px;">兄弟普通纸传真机</div>
<div class="t" style="left:450px;top:445px;"><span style="font-size:12.5px">FAX-888</span></div>
<div class="t" style="left:542px;top:445px;"><span style="font-size:12.5px">2025112845</span></div>
<div class="t" style="left:642px;top:445px;">台</div>
<div class="t" style="left:705px;top:445px;"><span style="font-size:12.5px">9</span></div>
<div class="t" style="left:775px;top:445px;"><span style="font-size:12.5px">1000</span></div>
<div class="t" style="left:845px;top:445px;"><span style="font-size:12.5px">9000</span></div>
<div class="t" style="left:915px;top:445px;">主仓库</div>
<svg style="left:1012px;top:444px;" width="13" height="13" viewBox="0 0 13 13"><defs><linearGradient id="cbg" x1="0" y1="0" x2="1" y2="1"><stop offset="0" stop-color="#d6d6d6"/><stop offset="1" stop-color="#f6f6f6"/></linearGradient></defs><rect x=".5" y=".5" width="12" height="12" fill="#fdfdfd" stroke="#7d7d7d"/><rect x="2" y="2" width="9" height="9" fill="url(#cbg)"/></svg>
<div style="left:255px;top:463px;width:841px;height:26px;background:#f6f4fd"></div>
<div style="left:210px;top:463px;width:44px;height:26px;background:#f5f5f5"></div>
<div class="t" style="left:210px;top:471px;width:44px;text-align:center;font-family:'Liberation Serif',serif;font-size:12px">10</div>
<div class="t" style="left:257px;top:469px;"><span style="font-size:12.5px">100102002</span></div>
<div class="t" style="left:327px;top:471px;">兄弟普通纸传真机</div>
<div class="t" style="left:450px;top:471px;"><span style="font-size:12.5px">FAX-888</span></div>
<div class="t" style="left:542px;top:471px;"><span style="font-size:12.5px">2025112847</span></div>
<div class="t" style="left:642px;top:471px;">台</div>
<div class="t" style="left:705px;top:471px;"><span style="font-size:12.5px">9</span></div>
<div class="t" style="left:775px;top:471px;"><span style="font-size:12.5px">1000</span></div>
<div class="t" style="left:845px;top:471px;"><span style="font-size:12.5px">9000</span></div>
<div class="t" style="left:915px;top:471px;">第一仓库</div>
<svg style="left:1012px;top:470px;" width="13" height="13" viewBox="0 0 13 13"><defs><linearGradient id="cbg" x1="0" y1="0" x2="1" y2="1"><stop offset="0" stop-color="#d6d6d6"/><stop offset="1" stop-color="#f6f6f6"/></linearGradient></defs><rect x=".5" y=".5" width="12" height="12" fill="#fdfdfd" stroke="#7d7d7d"/><rect x="2" y="2" width="9" height="9" fill="url(#cbg)"/></svg>
<div style="left:255px;top:489px;width:841px;height:26px;background:#eef6fe"></div>
<div style="left:210px;top:489px;width:44px;height:26px;background:#f5f5f5"></div>
<div class="t" style="left:210px;top:497px;width:44px;text-align:center;font-family:'Liberation Serif',serif;font-size:12px">11</div>
<div class="t" style="left:257px;top:497px;"><span style="font-size:12.5px">1004001</span></div>
<div class="t" style="left:327px;top:497px;">亚拓管理软件</div>
<div class="t" style="left:450px;top:497px;"></div>
<div class="t" style="left:542px;top:497px;"><span style="font-size:12.5px">2025112742</span></div>
<div class="t" style="left:642px;top:497px;">套</div>
<div class="t" style="left:705px;top:497px;"><span style="font-size:12.5px">4</span></div>
<div class="t" style="left:775px;top:497px;"><span style="font-size:12.5px">1200</span></div>
<div class="t" style="left:845px;top:497px;"><span style="font-size:12.5px">4800</span></div>
<div class="t" style="left:915px;top:497px;">主仓库</div>
<svg style="left:1012px;top:496px;" width="13" height="13" viewBox="0 0 13 13"><defs><linearGradient id="cbg" x1="0" y1="0" x2="1" y2="1"><stop offset="0" stop-color="#d6d6d6"/><stop offset="1" stop-color="#f6f6f6"/></linearGradient></defs><rect x=".5" y=".5" width="12" height="12" fill="#fdfdfd" stroke="#7d7d7d"/><rect x="2" y="2" width="9" height="9" fill="url(#cbg)"/></svg>
<div style="left:210px;top:255px;width:886px;height:1px;background:#dcdcdc"></div>
<div style="left:210px;top:255px;width:44px;height:1px;background:#a9a9a9"></div>
<div style="left:210px;top:281px;width:886px;height:1px;background:#dcdcdc"></div>
<div style="left:210px;top:281px;width:44px;height:1px;background:#a9a9a9"></div>
<div style="left:210px;top:307px;width:886px;height:1px;background:#dcdcdc"></div>
<div style="left:210px;top:307px;width:44px;height:1px;background:#a9a9a9"></div>
<div style="left:210px;top:333px;width:886px;height:1px;background:#dcdcdc"></div>
<div style="left:210px;top:333px;width:44px;height:1px;background:#a9a9a9"></div>
<div style="left:210px;top:359px;width:886px;height:1px;background:#dcdcdc"></div>
<div style="left:210px;top:359px;width:44px;height:1px;background:#a9a9a9"></div>
<div style="left:210px;top:385px;width:886px;height:1px;background:#dcdcdc"></div>
<div style="left:210px;top:385px;width:44px;height:1px;background:#a9a9a9"></div>
<div style="left:210px;top:411px;width:886px;height:1px;background:#dcdcdc"></div>
<div style="left:210px;top:411px;width:44px;height:1px;background:#a9a9a9"></div>
<div style="left:210px;top:437px;width:886px;height:1px;background:#dcdcdc"></div>
<div style="left:210px;top:437px;width:44px;height:1px;background:#a9a9a9"></div>
<div style="left:210px;top:463px;width:886px;height:1px;background:#dcdcdc"></div>
<div style="left:210px;top:463px;width:44px;height:1px;background:#a9a9a9"></div>
<div style="left:210px;top:489px;width:886px;height:1px;background:#dcdcdc"></div>
<div style="left:210px;top:489px;width:44px;height:1px;background:#a9a9a9"></div>
<div style="left:210px;top:515px;width:886px;height:1px;background:#dcdcdc"></div>
<div style="left:210px;top:515px;width:44px;height:1px;background:#a9a9a9"></div>
<div style="left:254px;top:229px;width:1px;height:287px;background:#a9a9a9"></div>
<div style="left:210px;top:229px;width:44px;height:287px;border-bottom:1px solid #a9a9a9"></div>
<div style="left:324px;top:229px;width:1px;height:287px;background:#dcdcdc"></div>
<div style="left:447px;top:229px;width:1px;height:287px;background:#dcdcdc"></div>
<div style="left:539px;top:229px;width:1px;height:287px;background:#dcdcdc"></div>
<div style="left:639px;top:229px;width:1px;height:287px;background:#dcdcdc"></div>
<div style="left:702px;top:229px;width:1px;height:287px;background:#dcdcdc"></div>
<div style="left:772px;top:229px;width:1px;height:287px;background:#dcdcdc"></div>
<div style="left:842px;top:229px;width:1px;height:287px;background:#dcdcdc"></div>
<div style="left:912px;top:229px;width:1px;height:287px;background:#dcdcdc"></div>
<div style="left:992px;top:229px;width:1px;height:287px;background:#dcdcdc"></div>
<div style="left:1044px;top:229px;width:1px;height:287px;background:#dcdcdc"></div>
<div style="left:210px;top:559px;width:886px;height:28px;background:linear-gradient(#f8f8f9 0%,#f1f2f4 100%);border-top:1px solid #c8c8c8"></div>
<div style="left:210px;top:560px;width:44px;height:8px;background:#fff"></div>
<div class="t" style="left:731px;top:568px;color:#333"><span style="font-size:12.5px">37</span></div>
<div class="t" style="left:860px;top:568px;color:#333"><span style="font-size:12.5px">41200</span></div>
<div style="left:210px;top:587px;width:886px;height:18px;background:#f0f0f0;border-top:1px solid #d8d8d8"></div>
<svg style="left:214px;top:592px;" width="5" height="8" viewBox="0 0 5 8"><path d="M4.5 0 L4.5 8 L0 4 Z" fill="#606060"/></svg>
<svg style="left:1086px;top:592px;" width="5" height="8" viewBox="0 0 5 8"><path d="M.5 0 L.5 8 L5 4 Z" fill="#606060"/></svg>
<div style="left:227px;top:589px;width:563px;height:15px;border:1px solid #9a9a9a;border-radius:2px;background:linear-gradient(#f3f3f3 0%,#e8e8e8 45%,#d6d6d6 55%,#cfcfcf 100%)"></div>
<svg style="left:503px;top:593px;" width="8" height="7" viewBox="0 0 8 7"><rect x="0" y="0" width="1" height="7" fill="#555"/><rect x="3" y="0" width="1" height="7" fill="#555"/><rect x="6" y="0" width="1" height="7" fill="#555"/></svg>
<div class="t" style="left:222px;top:614px;">已加载11条记录</div>
<div style="left:859px;top:609px;width:100px;height:30px;border:1px solid #707070;border-radius:3px;background:linear-gradient(#f2f2f2 0%,#ebebeb 50%,#dddddd 51%,#cfcfcf 100%)"></div>
<svg style="left:875px;top:617px;" width="16" height="14" viewBox="0 0 16 14"><defs><linearGradient id="bt" x1="0" y1="0" x2="1" y2="0"><stop offset="0" stop-color="#cfe6fb"/><stop offset="1" stop-color="#7ab6ee"/></linearGradient></defs><path d="M1.5 1 L7.5 7 L1.5 13 Z" fill="url(#bt)" stroke="#4a90d8"/><path d="M8.5 1 L14.5 7 L8.5 13 Z" fill="url(#bt)" stroke="#4a90d8"/></svg>
<div class="t" style="left:895px;top:617px;">加载更多</div>
<div style="left:974px;top:609px;width:100px;height:30px;border:1px solid #707070;border-radius:3px;background:linear-gradient(#f2f2f2 0%,#ebebeb 50%,#dddddd 51%,#cfcfcf 100%)"></div>
<svg style="left:990px;top:617px;" width="16" height="14" viewBox="0 0 16 14"><path d="M2.5 1 L8.5 7 L2.5 13 Z" fill="url(#bt)" stroke="#4a90d8"/><rect x="10.5" y="1.5" width="3" height="11" rx="1" fill="url(#bt)" stroke="#4a90d8"/></svg>
<div class="t" style="left:1010px;top:617px;">加载全部</div>
<div style="left:189px;top:74px;width:115px;height:34px;border:3.5px solid #f00808;border-radius:31px/17px"></div>
<div style="left:796px;top:161px;width:92px;height:33px;border:3.5px solid #f00808;border-radius:27px/16.5px"></div></body></html>
